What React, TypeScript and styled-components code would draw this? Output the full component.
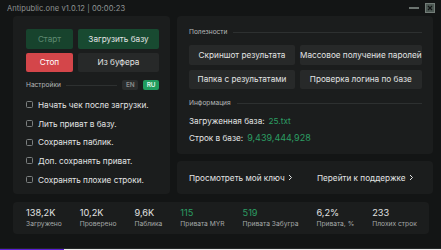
import styled, { createGlobalStyle } from 'styled-components';

const COLORS = {
  bg: '#131515',
  card: '#1b1d1d',
  gray: '#272929',
  line: '#2d3030',
  text: '#e2e4e4',
  muted: '#9a9e9e',
  green: '#2c9d63',
  greenDark: '#184a31',
  red: '#d4464a',
};

const GlobalStyle = createGlobalStyle`
  html, body {
    margin: 0;
    padding: 0;
    background: #f2f2f2;
  }
  * {
    box-sizing: border-box;
  }
  body {
    font-family: Inter, 'Noto Sans', sans-serif;
  }
`;

const checks = [
  'Начать чек после загрузки.',
  'Лить приват в базу.',
  'Сохранять паблик.',
  'Доп. сохранять приват.',
  'Сохранять плохие строки.',
];

const tools = [
  'Скриншот результата',
  'Массовое получение паролей',
  'Папка с результатами',
  'Проверка логина по базе',
];

const stats = [
  { value: '138,2K', label: 'Загружено' },
  { value: '10,2K', label: 'Проверено' },
  { value: '9,6K', label: 'Паблика' },
  { value: '115', label: 'Привата MYR', green: true },
  { value: '519', label: 'Привата Забугра', green: true },
  { value: '6,2%', label: 'Привата, %' },
  { value: '233', label: 'Плохих строк' },
];

const Chevron = () => (
  <svg width="5" height="7" viewBox="0 0 5 7" fill="none">
    <path d="M1 1l2.5 2.5L1 6" stroke="#e2e4e4" strokeWidth="1" />
  </svg>
);

const App = () => {
  const progress = 14.5;

  return (
    <>
      <GlobalStyle />
      <S.Window>
        <S.TitleBar>
          <S.Title>Antipublic.one v1.0.12 | 00:00:23</S.Title>
          <S.Controls>
            <S.Minimize />
            <S.Close>
              <svg width="6" height="6" viewBox="0 0 6 6">
                <path d="M1 1l4 4M5 1L1 5" stroke="#121414" strokeWidth="1.2" />
              </svg>
            </S.Close>
          </S.Controls>
        </S.TitleBar>

        <S.Main>
          <S.LeftCard>
            <S.Actions>
              <S.Button $variant="start">Старт</S.Button>
              <S.Button $variant="green">Загрузить базу</S.Button>
              <S.Button $variant="red">Стоп</S.Button>
              <S.Button>Из буфера</S.Button>
            </S.Actions>

            <S.SettingsRow>
              <S.SectionLabel>Настройки</S.SectionLabel>
              <S.Line />
              <S.Lang>EN</S.Lang>
              <S.Lang $active>RU</S.Lang>
            </S.SettingsRow>

            <S.CheckList>
              {checks.map((c) => (
                <S.CheckRow key={c}>
                  <S.Checkbox />
                  <span>{c}</span>
                </S.CheckRow>
              ))}
            </S.CheckList>
          </S.LeftCard>

          <S.RightColumn>
            <S.ToolsCard>
              <S.SectionHeader>
                <S.SectionLabel>Полезности</S.SectionLabel>
                <S.Line />
              </S.SectionHeader>
              <S.ToolGrid>
                {tools.map((t) => (
                  <S.Button key={t}>{t}</S.Button>
                ))}
              </S.ToolGrid>
              <S.SectionHeader $top={9}>
                <S.SectionLabel>Информация</S.SectionLabel>
                <S.Line />
              </S.SectionHeader>
              <S.InfoRow $top={7}>
                Загруженная база: <S.Green>25.txt</S.Green>
              </S.InfoRow>
              <S.InfoRow $top={6}>
                Строк в базе: <S.Green $big>9,439,444,928</S.Green>
              </S.InfoRow>
            </S.ToolsCard>

            <S.LinksCard>
              <S.Link>
                Просмотреть мой ключ <Chevron />
              </S.Link>
              <S.Link>
                Перейти к поддержке <Chevron />
              </S.Link>
            </S.LinksCard>
          </S.RightColumn>
        </S.Main>

        <S.Stats>
          {stats.map((s) => (
            <S.Stat key={s.label}>
              <S.StatValue $green={s.green}>{s.value}</S.StatValue>
              <S.StatLabel>{s.label}</S.StatLabel>
            </S.Stat>
          ))}
        </S.Stats>
      </S.Window>
      <S.Progress>
        <S.ProgressFill style={{ width: `${progress}%` }} />
      </S.Progress>
    </>
  );
};
export default App;

const S = {
  Window: styled.div`
    width: 441px;
    height: 249px;
    background: ${COLORS.bg};
    border-bottom: 1px solid #242727;
    display: flex;
    flex-direction: column;
    padding: 0 12px 0 13px;
  `,
  TitleBar: styled.div`
    height: 16px;
    margin: 0 -6px 0 -6px;
    display: flex;
    align-items: center;
    justify-content: space-between;
  `,
  Title: styled.span`
    font-size: 7.6px;
    color: #8e9292;
    letter-spacing: 0.05px;
  `,
  Controls: styled.div`
    display: flex;
    align-items: center;
    gap: 6px;
  `,
  Minimize: styled.div`
    width: 10px;
    height: 2px;
    background: #6c7470;
  `,
  Close: styled.div`
    width: 10px;
    height: 10px;
    background: #4c5853;
    border: 1px solid #737d78;
    display: flex;
    align-items: center;
    justify-content: center;
  `,
  Main: styled.div`
    display: grid;
    grid-template-columns: 157px 1fr;
    gap: 7px;
    height: 178px;
  `,
  LeftCard: styled.div`
    background: ${COLORS.card};
    border-radius: 4px;
    padding: 13px 11px 0 13px;
    display: flex;
    flex-direction: column;
  `,
  Actions: styled.div`
    display: grid;
    grid-template-columns: 47px 1fr;
    gap: 4px 5px;
  `,
  Button: styled.div<{ $variant?: 'start' | 'green' | 'red' }>`
    height: 19.5px;
    border-radius: 2px;
    display: flex;
    align-items: center;
    justify-content: center;
    font-size: 8.2px;
    white-space: nowrap;
    background: ${({ $variant }) =>
      $variant === 'start'
        ? '#17432d'
        : $variant === 'green'
        ? COLORS.greenDark
        : $variant === 'red'
        ? COLORS.red
        : COLORS.gray};
    color: ${({ $variant }) =>
      $variant === 'start' ? '#5f8a72' : $variant === 'red' ? '#ffffff' : COLORS.text};
  `,
  SettingsRow: styled.div`
    margin-top: 8px;
    height: 10px;
    display: flex;
    align-items: center;
    gap: 5px;
  `,
  SectionLabel: styled.span`
    font-size: 6.6px;
    color: #b4b8b8;
    white-space: nowrap;
  `,
  Line: styled.div`
    flex: 1;
    height: 1px;
    background: ${COLORS.line};
  `,
  Lang: styled.div<{ $active?: boolean }>`
    height: 10px;
    padding: 0 3.5px;
    border-radius: 2px;
    display: flex;
    align-items: center;
    font-size: 6.4px;
    font-weight: 600;
    background: ${({ $active }) => ($active ? '#1f9c5e' : '#2a2c2c')};
    color: ${({ $active }) => ($active ? '#e4f7ec' : '#8a8e8e')};
  `,
  CheckList: styled.div`
    margin-top: 9px;
    display: flex;
    flex-direction: column;
    gap: 7px;
  `,
  CheckRow: styled.div`
    height: 11.7px;
    display: flex;
    align-items: center;
    gap: 5px;
    font-size: 8.2px;
    color: ${COLORS.text};
    white-space: nowrap;
  `,
  Checkbox: styled.div`
    width: 7px;
    height: 7px;
    border: 1px solid #7c8080;
    border-radius: 1.5px;
    flex-shrink: 0;
  `,
  RightColumn: styled.div`
    display: flex;
    flex-direction: column;
    gap: 7px;
  `,
  ToolsCard: styled.div`
    height: 138px;
    background: ${COLORS.card};
    border-radius: 4px;
    padding: 11px 11px 0 12px;
    display: flex;
    flex-direction: column;
  `,
  SectionHeader: styled.div<{ $top?: number }>`
    margin-top: ${({ $top }) => $top ?? 0}px;
    height: 10px;
    display: flex;
    align-items: center;
    gap: 6px;
  `,
  ToolGrid: styled.div`
    margin-top: 8px;
    display: grid;
    grid-template-columns: 106px 1fr;
    gap: 5px;
  `,
  InfoRow: styled.div<{ $top?: number }>`
    margin-top: ${({ $top }) => $top ?? 0}px;
    height: 11px;
    display: flex;
    align-items: center;
    gap: 4px;
    font-size: 8.2px;
    color: ${COLORS.text};
    white-space: nowrap;
  `,
  Green: styled.span<{ $big?: boolean }>`
    color: ${COLORS.green};
    font-size: ${({ $big }) => ($big ? '9px' : '8.2px')};
  `,
  LinksCard: styled.div`
    flex: 1;
    background: ${COLORS.card};
    border-radius: 4px;
    padding: 0 12px;
    display: grid;
    grid-template-columns: 128px 1fr;
    align-items: center;
  `,
  Link: styled.div`
    display: flex;
    align-items: center;
    gap: 3px;
    font-size: 8.2px;
    color: ${COLORS.text};
    white-space: nowrap;
  `,
  Stats: styled.div`
    margin-top: 8px;
    height: 32px;
    background: ${COLORS.card};
    border-radius: 4px;
    padding: 0 13px;
    display: flex;
    align-items: center;
    gap: 18px;
  `,
  Stat: styled.div`
    display: flex;
    flex-direction: column;
    gap: 2px;
  `,
  StatValue: styled.span<{ $green?: boolean }>`
    font-size: 9.2px;
    line-height: 11px;
    color: ${({ $green }) => ($green ? COLORS.green : COLORS.text)};
  `,
  StatLabel: styled.span`
    font-size: 6.7px;
    line-height: 9px;
    color: #a4a8a8;
    white-space: nowrap;
  `,
  Progress: styled.div`
    width: 441px;
    height: 1px;
    background: #ededed;
  `,
  ProgressFill: styled.div`
    height: 100%;
    background: #5a1fd6;
  `,
};
